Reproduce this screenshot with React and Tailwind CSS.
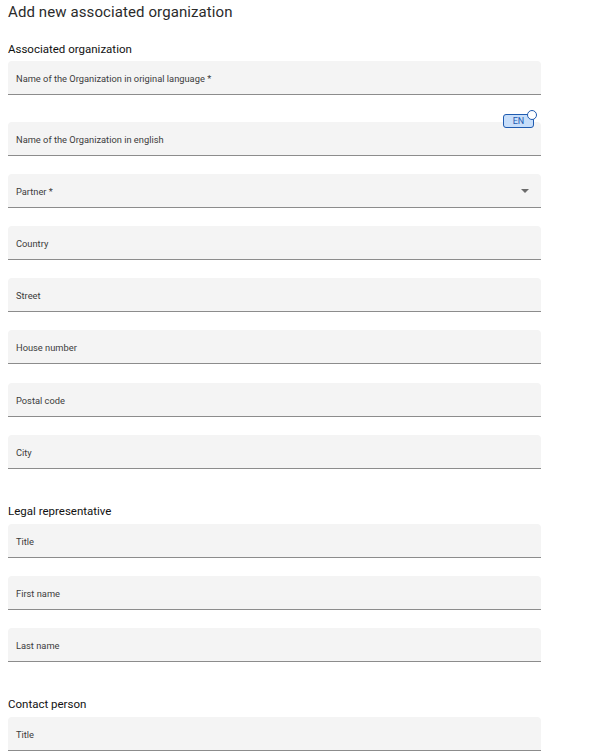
import React from 'react';

const Field = ({ label, select, className = '' }) => (
  <div className={`relative flex items-center h-[34px] w-[533px] bg-[#f4f4f4] rounded-t-[4px] border-b border-[#8c8c8c] pl-2 pr-3 pt-[2px] ${className}`}>
    <span className="text-[9.3px] text-[#3c3c3c]">{label}</span>
    {select && (
      <svg className="ml-auto mb-[2px]" width="8" height="4" viewBox="0 0 8 4">
        <path d="M0 0h8L4 4z" fill="#6b6b6b" />
      </svg>
    )}
  </div>
);

const Heading = ({ children, className = '' }) => (
  <h3 className={`text-[11.5px] font-normal text-[#111] leading-[14px] ${className}`}>{children}</h3>
);

const App = () => {
  return (
    <div className="font-['Roboto',sans-serif] bg-white min-h-screen px-2 pt-[3px]">
      <h2 className="text-[15px] text-[#2b2b2b] leading-[18px] tracking-[0.1px]">Add new associated organization</h2>

      <Heading className="mt-[21px]">Associated organization</Heading>

      <div className="mt-[5px] flex flex-col gap-[18px]">
        <Field label="Name of the Organization in original language *" />

        {/* english name + language badge */}
        <div className="relative mt-[9px] w-[533px]">
          <div className="absolute right-[7px] top-[-8px] z-10 h-[14px] w-[31px] rounded-[3px] border border-[#1f5bb0] bg-[#c7defa] flex items-center justify-center">
            <span className="text-[9px] text-[#1f5bb0] leading-none">EN</span>
            <span className="absolute right-[-4px] top-[-5px] h-[10px] w-[10px] rounded-full border border-[#1f5bb0] bg-white" />
          </div>
          <Field label="Name of the Organization in english" />
        </div>

        <Field label="Partner *" select />
        <Field label="Country" />
        <Field label="Street" />
        <Field label="House number" />
        <Field label="Postal code" className="mt-[1px]" />
        <Field label="City" />
      </div>

      <Heading className="mt-[35px]">Legal representative</Heading>
      <div className="mt-[6px] flex flex-col gap-[18px]">
        <Field label="Title" />
        <Field label="First name" />
        <Field label="Last name" />
      </div>

      <Heading className="mt-[35px]">Contact person</Heading>
      <div className="mt-[6px] flex flex-col gap-[18px] pb-6">
        <Field label="Title" />
      </div>
    </div>
  );
};

export default App;
